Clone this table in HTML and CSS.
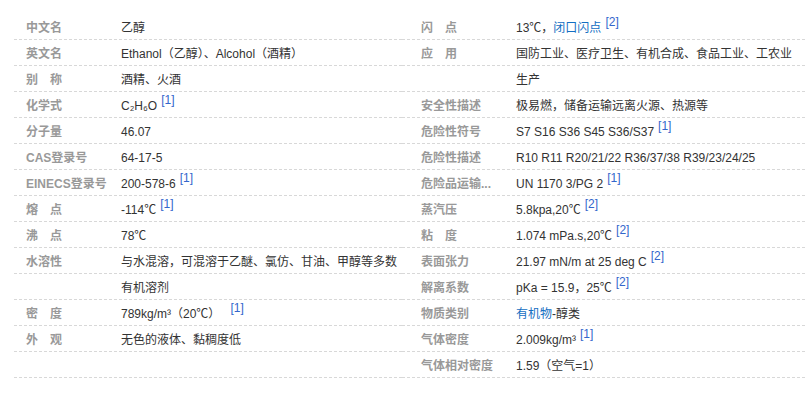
FILE: index.html
```html
<!DOCTYPE html>
<html lang="zh-CN">
  <head>
    <meta charset="UTF-8" />
    <meta name="viewport" content="width=device-width, initial-scale=1.0" />
    <title>乙醇 基本信息</title>
    <link rel="stylesheet" href="styles.css">
  </head>

  <body>
    <div class="basic-info">
      <div class="info-col left">
        <div class="row"><span class="name">中文名</span><span class="value">乙醇</span></div>
        <div class="row"><span class="name">英文名</span><span class="value">Ethanol（乙醇）、Alcohol（酒精）</span></div>
        <div class="row"><span class="name">别&#12288;称</span><span class="value">酒精、火酒</span></div>
        <div class="row"><span class="name">化学式</span><span class="value">C₂H₆O<sup class="ref">[1]</sup></span></div>
        <div class="row"><span class="name">分子量</span><span class="value">46.07</span></div>
        <div class="row"><span class="name">CAS登录号</span><span class="value">64-17-5</span></div>
        <div class="row"><span class="name">EINECS登录号</span><span class="value">200-578-6<sup class="ref">[1]</sup></span></div>
        <div class="row"><span class="name">熔&#12288;点</span><span class="value">-114℃<sup class="ref">[1]</sup></span></div>
        <div class="row"><span class="name">沸&#12288;点</span><span class="value">78℃</span></div>
        <div class="row"><span class="name">水溶性</span><span class="value">与水混溶，可混溶于乙醚、氯仿、甘油、甲醇等多数</span></div>
        <div class="row"><span class="name"></span><span class="value">有机溶剂</span></div>
        <div class="row"><span class="name">密&#12288;度</span><span class="value">789kg/m³（20℃）<sup class="ref wide">[1]</sup></span></div>
        <div class="row"><span class="name">外&#12288;观</span><span class="value">无色的液体、黏稠度低</span></div>
        <div class="row"><span class="name"></span><span class="value"></span></div>
      </div>

      <div class="info-col right">
        <div class="row"><span class="name">闪&#12288;点</span><span class="value">13℃，<a class="link" href="#">闭口闪点</a><sup class="ref">[2]</sup></span></div>
        <div class="row"><span class="name">应&#12288;用</span><span class="value">国防工业、医疗卫生、有机合成、食品工业、工农业</span></div>
        <div class="row"><span class="name"></span><span class="value">生产</span></div>
        <div class="row"><span class="name">安全性描述</span><span class="value">极易燃，储备运输远离火源、热源等</span></div>
        <div class="row"><span class="name">危险性符号</span><span class="value">S7 S16 S36 S45 S36/S37<sup class="ref">[1]</sup></span></div>
        <div class="row"><span class="name">危险性描述</span><span class="value">R10 R11 R20/21/22 R36/37/38 R39/23/24/25</span></div>
        <div class="row"><span class="name">危险品运输...</span><span class="value">UN 1170 3/PG 2<sup class="ref">[1]</sup></span></div>
        <div class="row"><span class="name">蒸汽压</span><span class="value">5.8kpa,20℃<sup class="ref">[2]</sup></span></div>
        <div class="row"><span class="name">粘&#12288;度</span><span class="value">1.074 mPa.s,20℃<sup class="ref">[2]</sup></span></div>
        <div class="row"><span class="name">表面张力</span><span class="value">21.97 mN/m at 25 deg C<sup class="ref">[2]</sup></span></div>
        <div class="row"><span class="name">解离系数</span><span class="value">pKa = 15.9，25℃<sup class="ref">[2]</sup></span></div>
        <div class="row"><span class="name">物质类别</span><span class="value"><a class="link" href="#">有机物</a>-醇类</span></div>
        <div class="row"><span class="name">气体密度</span><span class="value">2.009kg/m³<sup class="ref">[1]</sup></span></div>
        <div class="row"><span class="name">气体相对密度</span><span class="value">1.59（空气=1）</span></div>
      </div>
    </div>
  </body>
</html>
```

FILE: styles.css
```css
body {
  margin: 0;
  background-color: white;
  font-family: "Liberation Sans", "Noto Sans CJK SC", sans-serif;
  font-size: 12px;
  color: #333;
}

.basic-info {
  display: flex;
  padding: 14px 0 0 14px;
}

.info-col.left {
  width: 388px;
}

.info-col.right {
  width: 403px;
}

.row {
  display: flex;
  height: 21px;
  line-height: 21px;
  padding-top: 4px;
  padding-bottom: 1px;
  white-space: nowrap;
  background-image: linear-gradient(to right, #d8d8d8 3px, transparent 3px);
  background-size: 5px 1px;
  background-repeat: repeat-x;
  background-position: left bottom;
}

.name {
  width: 95px;
  padding-left: 12px;
  flex-shrink: 0;
  color: #999;
  font-weight: bold;
}

.right .name {
  padding-left: 19px;
}

.value {
  color: #333;
}

.link {
  color: #136ec2;
  text-decoration: none;
}

.ref {
  font-size: 12px;
  line-height: 0;
  vertical-align: 6px;
  margin-left: 4px;
  color: #3366cc;
}

.ref.wide {
  margin-left: 10px;
}
```
